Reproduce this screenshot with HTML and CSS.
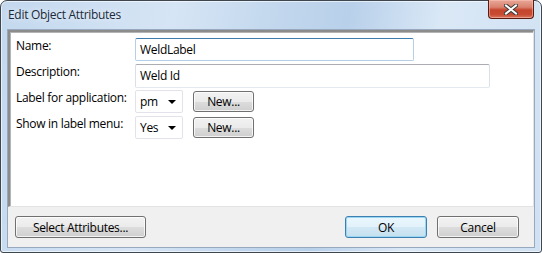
FILE: index.html
```html
<!DOCTYPE html>
<html lang="en">
<head>
  <meta charset="UTF-8">
  <title>Edit Object Attributes</title>
  <link rel="stylesheet" href="styles.css">
</head>
<body>
  <div class="window">
    <div class="titlebar">
      <span class="title">Edit Object Attributes</span>
      <div class="close">
        <svg width="14" height="11" viewBox="0 0 14 11">
          <path d="M2 1.5 L12 9.5 M12 1.5 L2 9.5" stroke="#3a3a3a" stroke-width="4" stroke-linecap="square"/>
          <path d="M2 1.5 L12 9.5 M12 1.5 L2 9.5" stroke="#ffffff" stroke-width="2" stroke-linecap="square"/>
        </svg>
      </div>
    </div>

    <div class="client">
      <div class="panel">
        <div class="form">
          <div class="lbl">Name:</div>
          <div class="row">
            <div class="text focus name">WeldLabel</div>
          </div>

          <div class="lbl">Description:</div>
          <div class="row">
            <div class="text desc">Weld Id</div>
          </div>

          <div class="lbl">Label for application:</div>
          <div class="row">
            <div class="combo"><span>pm</span><span class="arrow"></span></div>
            <div class="btn small">New...</div>
          </div>

          <div class="lbl">Show in label menu:</div>
          <div class="row">
            <div class="combo"><span>Yes</span><span class="arrow"></span></div>
            <div class="btn small">New...</div>
          </div>
        </div>
      </div>

      <div class="footer">
        <div class="btn select">Select Attributes...</div>
        <div class="actions">
          <div class="btn ok default">OK</div>
          <div class="btn ok">Cancel</div>
        </div>
      </div>
    </div>
  </div>
</body>
</html>
```

FILE: styles.css
```css
body {
  margin: 0;
  font-family: 'Segoe UI', 'Open Sans', sans-serif;
  font-size: 12px;
  letter-spacing: -0.3px;
  color: #000;
  background: #ffffff;
}

.window {
  width: 542px;
  height: 253px;
  box-sizing: border-box;
  border: 1px solid #3e4650;
  border-radius: 7px 7px 3px 3px;
  background: linear-gradient(100deg, #c3d8ee 0%, #d6e5f5 30%, #c2d7ed 48%, #b8d0ea 60%, #dae8f6 76%, #cfe1f3 100%);
  box-shadow: inset 0 0 0 1px rgba(255, 255, 255, 0.6);
  display: flex;
  flex-direction: column;
}

.titlebar {
  height: 28px;
  display: flex;
  justify-content: space-between;
  align-items: flex-start;
  padding-left: 7px;
  padding-right: 7px;
}

.title {
  line-height: 28px;
  color: #1a2a3a;
  text-shadow: 0 0 6px rgba(255, 255, 255, 0.9);
}

.close {
  width: 44px;
  height: 18px;
  margin-top: -1px;
  border: 1px solid #5a1a10;
  border-top: none;
  border-radius: 0 0 4px 4px;
  background: linear-gradient(#e8a797 0%, #d9826f 40%, #c5452d 55%, #c64a31 80%, #d9765f 100%);
  box-shadow: inset 0 0 0 1px rgba(255, 200, 190, 0.5);
  display: flex;
  align-items: center;
  justify-content: center;
}

.client {
  flex: 1;
  margin: 0 6px 4px 6px;
  border: 1px solid #98a9bd;
  background: #f0f0f0;
  display: flex;
  flex-direction: column;
}

.panel {
  height: 177px;
  box-sizing: border-box;
  background: #ffffff;
  border-top: 2px solid #8c8c8c;
  border-left: 2px solid #8c8c8c;
  border-right: 1px solid #e3e3e3;
  border-bottom: 1px solid #e3e3e3;
  box-shadow: inset 1px 1px 0 #b4b4b4;
  padding: 6px 0 0 6px;
}

.form {
  display: grid;
  grid-template-columns: 119px 1fr;
  row-gap: 3px;
  align-items: start;
}

.lbl {
  line-height: 16px;
}

.row {
  display: flex;
  align-items: center;
  height: 23px;
  gap: 10px;
}

.text {
  height: 23px;
  box-sizing: border-box;
  border: 1px solid #dbdfe6;
  border-top-color: #abadb3;
  border-bottom-color: #e3e9ef;
  border-radius: 2px;
  padding-left: 4px;
  line-height: 21px;
  background: #fff;
}

.text.focus {
  border-color: #b5cfe7;
  border-top-color: #3d7bad;
}

.name {
  width: 279px;
  height: 23px;
}

.desc {
  width: 355px;
  height: 24px;
}

.combo {
  width: 48px;
  height: 23px;
  box-sizing: border-box;
  border: 1px solid #e2e3ea;
  border-radius: 2px;
  padding: 0 6px 0 4px;
  display: flex;
  align-items: center;
  justify-content: space-between;
  background: #fff;
}

.arrow {
  width: 0;
  height: 0;
  border-left: 4px solid transparent;
  border-right: 4px solid transparent;
  border-top: 4px solid #000;
}

.btn {
  height: 22px;
  box-sizing: border-box;
  border: 1px solid #707070;
  border-radius: 3px;
  background: linear-gradient(#f2f2f2 0%, #ebebeb 50%, #dddddd 50%, #cfcfcf 100%);
  box-shadow: inset 0 0 0 1px rgba(255, 255, 255, 0.75);
  display: flex;
  align-items: center;
  justify-content: center;
}

.btn.small {
  width: 61px;
  height: 21px;
}

.footer {
  flex: 1;
  display: flex;
  justify-content: space-between;
  align-items: flex-start;
  padding: 9px 15px 0 7px;
}

.select {
  width: 131px;
}

.actions {
  display: flex;
  gap: 10px;
}

.ok {
  width: 82px;
}

.default {
  border-color: #3c7fb1;
  background: linear-gradient(#eaf6fd 0%, #e2f1fa 50%, #d2e8f5 50%, #c6e0ef 100%);
  box-shadow: inset 0 0 0 1px #9ad6f2;
}
```
